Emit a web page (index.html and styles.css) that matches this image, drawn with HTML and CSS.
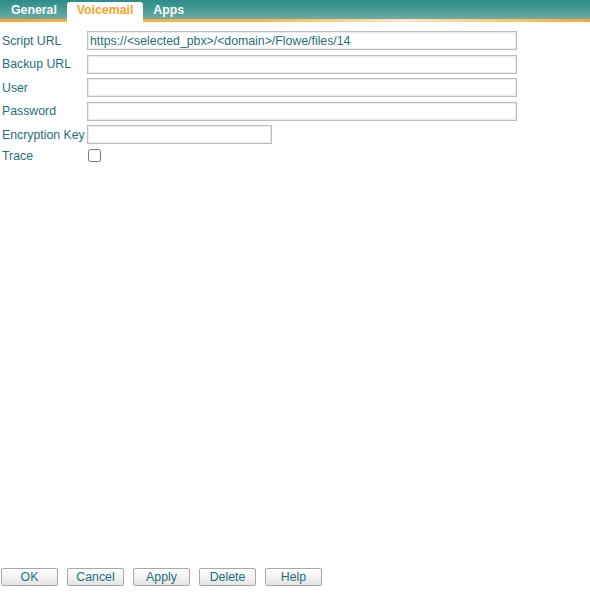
FILE: index.html
```html
<!DOCTYPE html>
<html>
<head>
<meta charset="utf-8">
<link rel="stylesheet" href="styles.css">
</head>
<body>
<div class="page">
  <div class="tabbar">
    <div class="tab">General</div>
    <div class="tab active">Voicemail</div>
    <div class="tab">Apps</div>
  </div>
  <div class="form">
    <div class="row">
      <label class="lbl">Script URL</label>
      <input class="field wide" type="text" value="https://&lt;selected_pbx&gt;/&lt;domain&gt;/Flowe/files/14">
    </div>
    <div class="row">
      <label class="lbl">Backup URL</label>
      <input class="field wide" type="text">
    </div>
    <div class="row">
      <label class="lbl">User</label>
      <input class="field wide" type="text">
    </div>
    <div class="row">
      <label class="lbl">Password</label>
      <input class="field wide" type="password">
    </div>
    <div class="row">
      <label class="lbl">Encryption Key</label>
      <input class="field short" type="text">
    </div>
    <div class="row check-row">
      <label class="lbl">Trace</label>
      <input class="check" type="checkbox">
    </div>
  </div>
  <div class="buttons">
    <button class="btn">OK</button>
    <button class="btn">Cancel</button>
    <button class="btn">Apply</button>
    <button class="btn">Delete</button>
    <button class="btn">Help</button>
  </div>
</div>
</body>
</html>
```

FILE: styles.css
```css
html, body {
  margin: 0;
  padding: 0;
  background: #ffffff;
}
body {
  font-family: "Liberation Sans", Arial, sans-serif;
  font-size: 12.3px;
  color: #1e6f76;
}
.page {
  display: flex;
  flex-direction: column;
  min-height: 599px;
  box-sizing: border-box;
}
.tabbar {
  display: flex;
  align-items: flex-end;
  height: 19px;
  padding-left: 1px;
  background: linear-gradient(to bottom, #2b8c88 0%, #4f9e9b 60%, #6faba8 100%);
  border-bottom: 3px solid transparent;
  border-image: linear-gradient(to right, #f9a92a 0%, #fab64a 45%, #fde6bd 68%, #fbc66e 85%, #f9a92a 100%) 1;
}
.tab {
  padding: 0 10px;
  font-weight: bold;
  color: #ffffff;
  margin-bottom: -3px;
  height: 20px;
  line-height: 17px;
  box-sizing: border-box;
}
.tab.active {
  background: #ffffff;
  color: #f5a32a;
  border-radius: 3px 3px 0 0;
}
.form {
  padding: 9px 0 0 2px;
  display: flex;
  flex-direction: column;
  gap: 4.5px;
}
.row {
  display: flex;
  align-items: center;
  height: 19px;
}
.lbl {
  width: 85px;
  flex: none;
  color: #1e6f76;
}
.field {
  box-sizing: border-box;
  height: 19px;
  border: 1px solid #bdbdbd;
  box-shadow: inset 0 0 0 1px #ebebeb;
  padding: 0 2px;
  font-family: "Liberation Sans", Arial, sans-serif;
  font-size: 12.3px;
  color: #1e6f76;
  background: #fff;
  outline: none;
  margin: 0;
}
.field.wide { width: 430px; }
.field.short { width: 185px; }
.check-row { height: 14px; }
.check {
  margin: 0 0 0 1px;
  width: 13px;
  height: 13px;
}
.buttons {
  margin-top: auto;
  display: flex;
  gap: 9px;
  padding: 0 0 13px 1px;
}
.btn {
  width: 57px;
  height: 18px;
  box-sizing: border-box;
  padding: 0;
  border: 1px solid #a8a8a8;
  border-radius: 2px;
  background: linear-gradient(to bottom, #ffffff 0%, #f3f3f3 50%, #e4e4e4 100%);
  font-family: "Liberation Sans", Arial, sans-serif;
  font-size: 12.3px;
  color: #1e6f76;
  line-height: 16px;
}
```
